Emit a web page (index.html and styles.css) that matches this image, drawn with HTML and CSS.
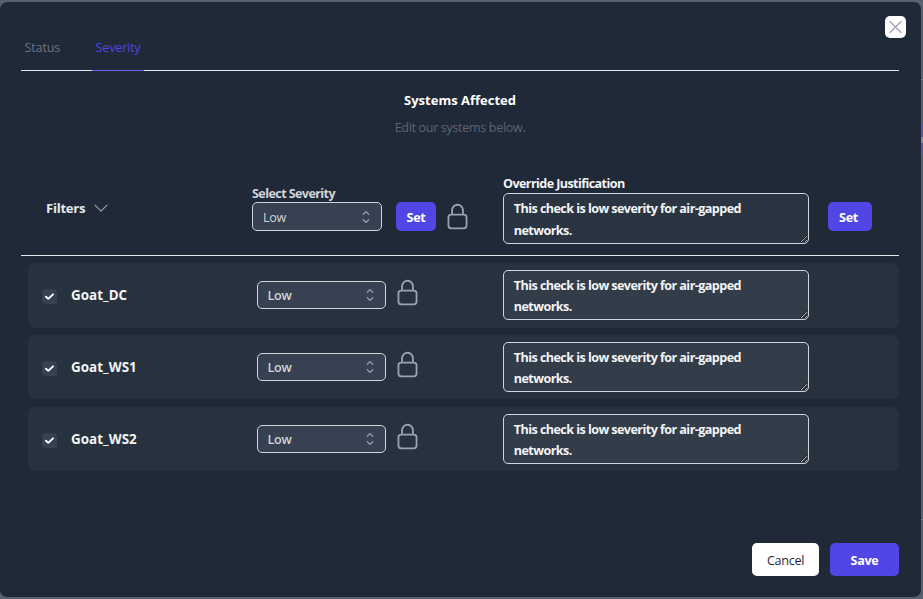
FILE: index.html
```html
<!DOCTYPE html>
<html lang="en">
<head>
<meta charset="utf-8">
<title>Systems Affected</title>
<link rel="stylesheet" href="styles.css">
</head>
<body>
<svg class="defs" width="0" height="0">
  <symbol id="lock" viewBox="0 0 24 24"><path d="M16.5 10.5V6.75a4.5 4.5 0 1 0-9 0v3.75m-.75 11.25h10.5a2.25 2.25 0 0 0 2.25-2.25v-6.75a2.25 2.25 0 0 0-2.25-2.25H6.75a2.25 2.25 0 0 0-2.25 2.25v6.75a2.25 2.25 0 0 0 2.25 2.25z"/></symbol>
  <symbol id="updown" viewBox="0 0 20 20"><path d="M7 7l3-3 3 3m0 6l-3 3-3-3"/></symbol>
  <symbol id="check" viewBox="0 0 16 16"><path d="M4.2 8.2l2.5 2.3 5.1-4.8"/></symbol>
</svg>
<main class="modal">
  <button class="close" aria-label="Close"><svg viewBox="0 0 21 22"><path d="M5 5.5l11 11M16 5.5l-11 11"/></svg></button>
  <nav class="tabs">
    <a class="tab"><span>Status</span></a>
    <a class="tab active"><span>Severity</span></a>
  </nav>
  <header class="heading">
    <h1><span>Systems Affected</span></h1>
    <p><span>Edit our systems below.</span></p>
  </header>
  <section class="toolbar">
    <div class="filters"><span>Filters</span><svg viewBox="0 0 14 9"><path d="M1 1.2l6 6 6-6"/></svg></div>
    <div class="severity">
      <label><span>Select Severity</span></label>
      <div class="controls">
        <div class="select regular"><span>Low</span><svg><use href="#updown"/></svg></div>
        <button class="set">Set</button>
        <svg class="lock"><use href="#lock"/></svg>
      </div>
    </div>
    <div class="override">
      <label><span>Override Justification</span></label>
      <textarea spellcheck="false">This check is low severity for air-gapped
networks.</textarea>
    </div>
    <button class="set wide">Set</button>
  </section>
  <section class="rows">
    <article class="row">
      <span class="box"><svg><use href="#check"/></svg></span><span class="name">Goat_DC</span>
      <div class="select"><span>Low</span><svg><use href="#updown"/></svg></div>
      <svg class="lock"><use href="#lock"/></svg>
      <textarea spellcheck="false">This check is low severity for air-gapped
networks.</textarea>
    </article>
    <article class="row">
      <span class="box"><svg><use href="#check"/></svg></span><span class="name">Goat_WS1</span>
      <div class="select"><span>Low</span><svg><use href="#updown"/></svg></div>
      <svg class="lock"><use href="#lock"/></svg>
      <textarea spellcheck="false">This check is low severity for air-gapped
networks.</textarea>
    </article>
    <article class="row">
      <span class="box"><svg><use href="#check"/></svg></span><span class="name">Goat_WS2</span>
      <div class="select"><span>Low</span><svg><use href="#updown"/></svg></div>
      <svg class="lock"><use href="#lock"/></svg>
      <textarea spellcheck="false">This check is low severity for air-gapped
networks.</textarea>
    </article>
  </section>
  <footer class="actions">
    <button class="cancel">Cancel</button>
    <button class="save">Save</button>
  </footer>
</main>
</body>
</html>
```
FILE: styles.css
```css
* { box-sizing: border-box; }
body {
  margin: 0;
  height: 599px;
  overflow: hidden;
  padding: 2px 2px 2px 0;
  /* dimmed page visible around the dialog */
  background: linear-gradient(#59616f 79px, #7b828d 79px 80px, #59616f 80px 123px, #5d5a9c 123px 137px, #858a99 137px 143px, #5d5a9c 143px 156px, #59616f 156px 519px, #7b828d 519px 520px, #59616f 520px);
  font: 12.6px/18px "Open Sans", "Noto Sans", sans-serif;
  letter-spacing: -0.3px;
  color: #f3f4f6;
}
.defs { position: absolute; }
svg { display: block; fill: none; stroke: #9ca3af; stroke-width: 1.5; stroke-linecap: round; stroke-linejoin: round; }
button, textarea { font: inherit; letter-spacing: inherit; color: inherit; }
button { border: 0; padding: 0; border-radius: 5px; }
h1, p { margin: 0; }
.modal {
  position: relative;
  width: 921px;
  height: 595px;
  padding: 22px 22px 21px 21px;
  border-radius: 7px;
  background: #1f2937;
  display: flex;
  flex-direction: column;
}
.close { position: absolute; left: 885px; top: 14px; width: 21px; height: 22px; background: #fff; }
.close svg { width: 21px; height: 22px; stroke-width: 1.25; }
.tabs { display: flex; gap: 29px; height: 47px; border-bottom: 1px solid #e5e7eb; letter-spacing: -0.2px; }
.tab { height: 47px; padding: 15px 3px 0 3.6px; color: #6b7280; width: 42px; white-space: nowrap; }
.tab.active { width: 52px; color: #4f46e5; border-bottom: 1px solid #6366f1; }
.heading { height: 95px; padding-top: 20px; text-align: center; }
h1 { font-size: 13px; line-height: 18px; font-weight: 700; color: #fff; letter-spacing: 0; }
.heading p { margin-top: 10px; color: #5b6573; letter-spacing: -0.35px; }
.toolbar {
  height: 90px;
  display: grid;
  grid-template-columns: 231px 251px 325px 44px;
  border-bottom: 1px solid #e5e7eb;
}
.filters { display: flex; gap: 9px; padding: 33px 0 0 25px; font-size: 13.2px; font-weight: 700; color: #e5e7eb; }
.filters svg { width: 14px; height: 9px; margin-top: 5px; stroke-width: 1.1; }
.severity { padding-top: 18px; }
label { display: block; padding-top: 1px; height: 18px; font-weight: 700; letter-spacing: -0.6px; }
.severity label { color: #d1d5db; }
.controls { display: flex; }
.select {
  width: 130px;
  height: 29px;
  border: 1px solid #d1d5db;
  border-radius: 5px;
  background: #374151;
  padding: 0 6px 0 10px;
  display: flex;
  align-items: center;
  justify-content: space-between;
  font-weight: 600;
  color: #d1d5db;
}
.select.regular { font-weight: 400; }
.select.regular span { padding-top: 2px; }
.select svg { width: 18px; height: 18px; stroke-width: 1.4; }
.set { width: 40px; height: 29px; margin-left: 14px; padding-top: 2px; background: #4f46e5; font-weight: 700; color: #fff; }
.set.wide { width: 44px; margin: 36px 0 0; padding-right: 3px; }
.lock { width: 31px; height: 29px; flex: none; }
.controls .lock { margin-left: 6px; }
.override { padding-top: 8px; }
textarea {
  display: block;
  width: 306px;
  height: 51px;
  margin: 1px 0 0;
  padding: 4px 9.8px;
  border: 1px solid #d1d5db;
  border-radius: 5px;
  background: #2b3541;
  font-weight: 700;
  letter-spacing: -0.57px;
  line-height: 21.6px;
  overflow: hidden;
  outline: 0;
}
.rows { display: flex; flex-direction: column; gap: 8px; padding: 7px 0 0 7px; }
.row {
  height: 64px;
  display: grid;
  grid-template-columns: 14px 200px 129px 117px 306px;
  padding-left: 15px;
  border-radius: 7px;
  background: #28323e;
}
.row:first-child { height: 65px; margin-bottom: -1px; }
.box { width: 15px; height: 15px; margin: 26px 0 0 -1px; background: #374151; border-radius: 3px; }
.box svg { width: 15px; height: 15px; stroke: #fff; stroke-width: 2; }
.name { padding: 23px 0 0 14px; font-size: 13.4px; font-weight: 700; letter-spacing: 0.05px; }
.row .select { width: 129px; height: 28px; margin-top: 18px; padding-left: 9.5px; }
.row .select span { padding-top: 1px; }
.row .lock { margin: 15px 0 0 6px; }
.row textarea { height: 50px; margin-top: 7px; padding-top: 3.5px; background: #333d49; }
.actions { display: flex; justify-content: flex-end; gap: 11px; margin-top: auto; }
.actions button { height: 33px; padding-top: 2px; }
.cancel { width: 67px; background: #fff; color: #1f2937; }
.save { width: 69px; background: #4f46e5; color: #fff; font-weight: 700; }
```
